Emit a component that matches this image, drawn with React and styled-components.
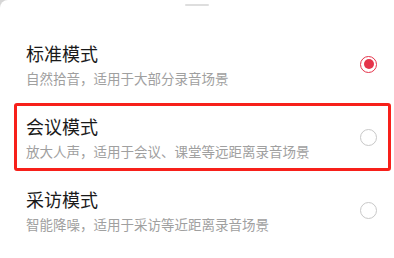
import styled, { createGlobalStyle } from "styled-components";

const GlobalStyle = createGlobalStyle`
  html, body {
    margin: 0;
    padding: 0;
    background: #d6d6d6;
  }
  body {
    font-family: "Noto Sans CJK SC", "Noto Sans", sans-serif;
    text-spacing-trim: space-all;
  }
`;

const Sheet = styled.div`
  width: 394px;
  height: 258px;
  background: #ffffff;
  border-top-left-radius: 8px;
  display: flex;
  flex-direction: column;
  align-items: stretch;
  overflow: hidden;
`;

const Handle = styled.div`
  align-self: center;
  width: 24px;
  height: 2px;
  border-radius: 1px;
  background: #dedede;
  margin: 4px 0 24px;
`;

const List = styled.div`
  display: flex;
  flex-direction: column;
  gap: 5px;
`;

const Row = styled.div`
  height: 68px;
  box-sizing: border-box;
  margin: 0 3px 0 14px;
  padding: 0 11px 0 9px;
  border: 3px solid ${({ $highlight }) => ($highlight ? "#f7201a" : "transparent")};
  border-radius: 3px;
  display: flex;
  align-items: center;
  justify-content: space-between;
`;

const Texts = styled.div`
  display: flex;
  flex-direction: column;
`;

const Title = styled.div`
  font-size: 18px;
  line-height: 22px;
  color: #1a1a1a;
`;

const Sub = styled.div`
  margin-top: 5px;
  font-size: 13.5px;
  line-height: 18px;
  color: #a0a0a0;
`;

const Radio = styled.div`
  width: 17px;
  height: 17px;
  box-sizing: border-box;
  border-radius: 50%;
  border: ${({ $on }) => ($on ? "1.6px solid #e5334a" : "1.3px solid #c8c8c8")};
  display: flex;
  align-items: center;
  justify-content: center;

  &::after {
    content: "";
    width: 10px;
    height: 10px;
    border-radius: 50%;
    background: #e5334a;
    display: ${({ $on }) => ($on ? "block" : "none")};
  }
`;

const modes = [
  { title: "标准模式", sub: "自然拾音，适用于大部分录音场景", on: true },
  { title: "会议模式", sub: "放大人声，适用于会议、课堂等远距离录音场景", highlight: true },
  { title: "采访模式", sub: "智能降噪，适用于采访等近距离录音场景" },
];

export default function App() {
  return (
    <>
      <GlobalStyle />
      <Sheet>
        <Handle />
        <List>
          {modes.map((m) => (
            <Row key={m.title} $highlight={m.highlight}>
              <Texts>
                <Title>{m.title}</Title>
                <Sub>{m.sub}</Sub>
              </Texts>
              <Radio $on={m.on} />
            </Row>
          ))}
        </List>
      </Sheet>
    </>
  );
}
